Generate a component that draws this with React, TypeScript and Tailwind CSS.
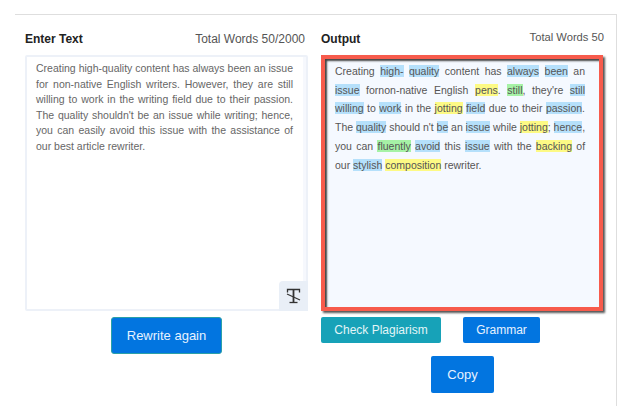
import React from 'react';

type Mark = 'b' | 'y' | 'g' | null;

const outputLines: { t: string; m: Mark }[][] = [
  [{ t: 'Creating', m: null }, { t: 'high-', m: 'b' }, { t: 'quality', m: 'b' }, { t: 'content', m: null }, { t: 'has', m: null }, { t: 'always', m: 'b' }, { t: 'been', m: 'b' }, { t: 'an', m: null }],
  [{ t: 'issue', m: 'b' }, { t: 'fornon-native', m: null }, { t: 'English', m: null }, { t: 'pens', m: 'y' }, { t: '.', m: null }, { t: 'still', m: 'g' }, { t: ',', m: null }, { t: "they're", m: null }, { t: 'still', m: 'b' }],
  [{ t: 'willing', m: 'b' }, { t: 'to', m: null }, { t: 'work', m: 'b' }, { t: 'in', m: null }, { t: 'the', m: null }, { t: 'jotting', m: 'y' }, { t: 'field', m: 'b' }, { t: 'due', m: null }, { t: 'to', m: null }, { t: 'their', m: null }, { t: 'passion', m: 'b' }, { t: '.', m: null }],
  [{ t: 'The', m: null }, { t: 'quality', m: 'b' }, { t: 'should', m: null }, { t: "n't", m: null }, { t: 'be', m: 'b' }, { t: 'an', m: null }, { t: 'issue', m: 'b' }, { t: 'while', m: null }, { t: 'jotting', m: 'y' }, { t: ';', m: null }, { t: 'hence', m: 'b' }, { t: ',', m: null }],
  [{ t: 'you', m: null }, { t: 'can', m: null }, { t: 'fluently', m: 'g' }, { t: 'avoid', m: 'b' }, { t: 'this', m: null }, { t: 'issue', m: 'b' }, { t: 'with', m: null }, { t: 'the', m: null }, { t: 'backing', m: 'y' }, { t: 'of', m: null }],
  [{ t: 'our', m: null }, { t: 'stylish', m: 'b' }, { t: 'composition', m: 'y' }, { t: 'rewriter.', m: null }],
];

const inputLines = [
  'Creating high-quality content has always been an issue',
  'for non-native English writers. However, they are still',
  'willing to work in the writing field due to their passion.',
  "The quality shouldn't be an issue while writing; hence,",
  'you can easily avoid this issue with the assistance of',
];

const markClass = (m: Mark) => {
  if (m === 'b') return 'bg-[#b5e0fb]';
  if (m === 'y') return 'bg-[#fdfa85]';
  if (m === 'g') return 'bg-[#a6f2a6]';
  return '';
};

export default function App() {
  return (
    <div className="w-[636px] h-[406px] overflow-hidden bg-white font-['Liberation_Sans',Arial,sans-serif]">
      <div className="ml-[15px] mt-[14px] w-[602px] h-[392px] border-t border-r border-[#dedede] pt-[15px] pl-[10px] flex gap-[13px]">
        {/* Left column */}
        <div className="w-[283px] flex flex-col">
          <div className="flex justify-between items-center h-[17px] mb-[8px] pr-[3px]">
            <span className="text-[12px] font-bold text-[#222]">Enter Text</span>
            <span className="text-[12px] text-[#555]">Total Words 50/2000</span>
          </div>
          <div className="relative h-[256px] border-2 border-[#edf1f8] rounded-[2px] bg-white shadow-[inset_-3px_0_0_#f6f8fd] pt-[4px] pl-[9px] pr-[13px] text-[10.5px] leading-[15.5px] text-[#666]">
            {inputLines.map((l, i) => (
              <div key={i} className="text-justify [text-align-last:justify]">{l}</div>
            ))}
            <div>our best article rewriter.</div>
            <div className="absolute right-[-2px] bottom-[-2px] w-[29px] h-[30px] rounded-tl-[4px] bg-[#e9eff7] flex items-center justify-center">
              <svg width="15" height="16" viewBox="0 0 15 16" fill="none" stroke="#333">
                <path d="M1.5 4.5V1.5H13.5V4.5" strokeWidth="1.3" />
                <path d="M7.5 1.5V14" strokeWidth="1.8" />
                <path d="M3.5 14.5H11.5" strokeWidth="1.3" />
                <path d="M1 6L14 12" strokeWidth="1.1" />
              </svg>
            </div>
          </div>
          <div className="flex justify-center mt-[6px]">
            <button className="w-[111px] h-[37px] rounded-[3px] border border-[#2ba0a8] bg-[#0275e0] text-[13px] text-[#e6f2ff]">Rewrite again</button>
          </div>
        </div>

        {/* Right column */}
        <div className="w-[283px] flex flex-col">
          <div className="flex justify-between items-center h-[17px] mb-[8px]">
            <span className="text-[12px] font-bold text-[#222]">Output</span>
            <span className="text-[11.2px] text-[#555] -mt-[3px]">Total Words 50</span>
          </div>
          <div className="w-[282px] h-[256px] border-[4px] border-[#f75b4c] bg-[#f5f9ff] shadow-[inset_2px_2px_2px_0_#444,2px_2px_2px_#555] pt-[3px] pl-[10px] pr-[14px] text-[10.5px] leading-[18.7px] text-[#555]">
            {outputLines.map((line, i) => (
              <div key={i} className={i === 5 ? '' : i === 3 ? 'text-justify [text-align-last:justify] [word-spacing:-1px]' : 'text-justify [text-align-last:justify]'}>
                {line.map((w, j) => {
                  const next = line[j + 1];
                  const glue = next && /^[.,;]$/.test(next.t);
                  const cls = markClass(w.m);
                  return (
                    <React.Fragment key={j}>
                      {cls ? <span className={cls}>{w.t}</span> : w.t}
                      {glue || j === line.length - 1 ? '' : ' '}
                    </React.Fragment>
                  );
                })}
              </div>
            ))}
          </div>
          <div className="flex gap-[22px] mt-[6px]">
            <button className="w-[120px] h-[26px] rounded-[2px] bg-[#17a2b8] text-[12px] text-[#e3f5f7]">Check Plagiarism</button>
            <button className="w-[77px] h-[26px] rounded-[2px] bg-[#0275e0] text-[12px] text-[#e6f2ff]">Grammar</button>
          </div>
          <div className="mt-[13px] ml-[110px]">
            <button className="w-[63px] h-[37px] rounded-[2px] bg-[#0275e0] text-[13px] text-[#e6f2ff]">Copy</button>
          </div>
        </div>
      </div>
    </div>
  );
}
